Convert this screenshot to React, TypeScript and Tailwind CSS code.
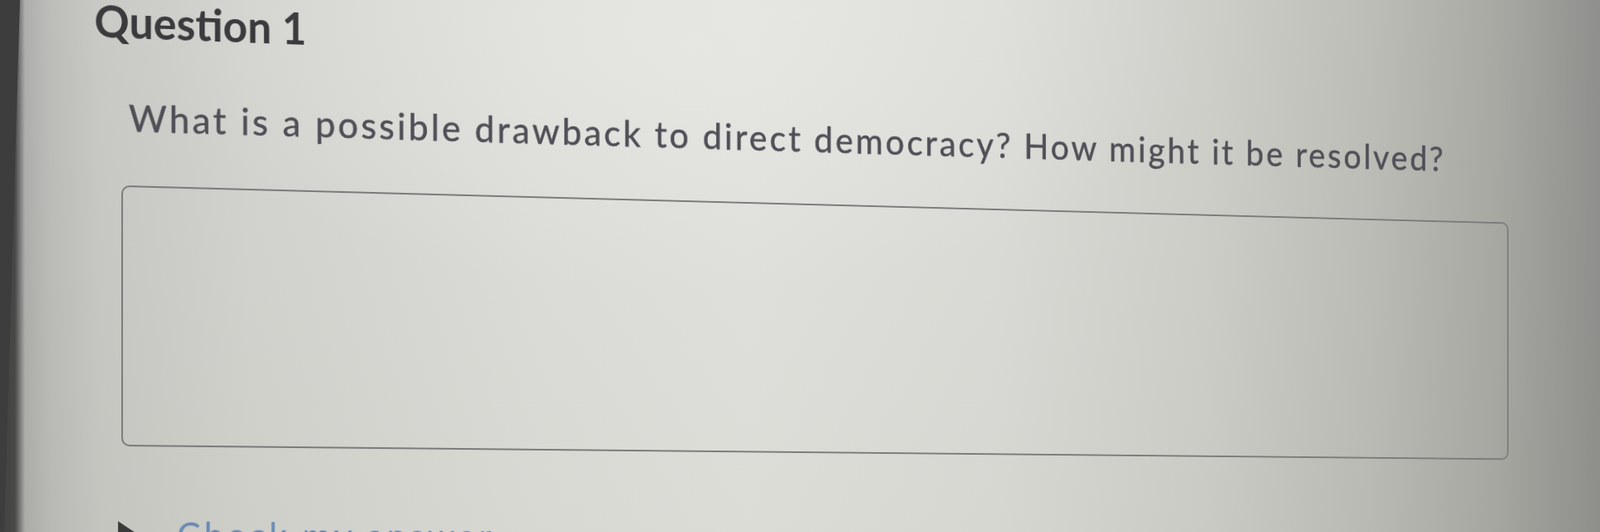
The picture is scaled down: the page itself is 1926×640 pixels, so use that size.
import React from "react";

export default function App() {
  return (
    <div className="relative w-[1926px] h-[640px] overflow-hidden font-['Lato',sans-serif] bg-[linear-gradient(90deg,#3e3e3e_0px,#464646_18px,#aeaeac_30px,#bcbcb9_60px,#c9c9c5_120px,#d3d4cf_300px,#dededa_650px,#e2e2de_900px,#dcdcd8_1200px,#cfcfca_1450px,#bdbdb8_1650px,#a9a9a4_1800px,#8f8f8d_1926px)]">
      {/* photo lighting */}
      <div className="pointer-events-none absolute inset-0 bg-[radial-gradient(ellipse_900px_420px_at_820px_60px,rgba(236,236,234,0.45),rgba(236,236,234,0)_70%)]" />
      <div className="pointer-events-none absolute inset-0 bg-[linear-gradient(180deg,rgba(0,0,0,0)_0%,rgba(120,125,100,0.06)_100%)]" />
      {/* screen bezel edge */}
      <div className="pointer-events-none absolute left-0 top-0 h-full w-[30px] bg-[#3d3d3d] [clip-path:polygon(0_0,24px_0,5px_100%,0_100%)]" />

      {/* content, photographed at an angle */}
      <div className="relative w-[2100px] h-[640px] origin-[150px_718px] [transform:perspective(3264px)_rotateY(10deg)]">
        <div className="flex flex-col items-start pl-[113px] pt-[2px]">
          <h2 className="text-[53px] leading-[48px] font-bold text-[#3b3b3e] whitespace-nowrap">
            Question 1
          </h2>
          <p className="ml-[42px] mt-[65px] text-[45px] leading-[52px] tracking-[3.4px] text-[#4f4f57] [-webkit-text-stroke:0.5px_#4f4f57] whitespace-nowrap">
            What is a possible drawback to direct democracy? How might it be resolved?
          </p>
          <div className="ml-[33px] mt-[56px] w-[1863px] h-[314px] rounded-[10px] border-2 border-[#7a7a7a]" />
          <div className="ml-[29px] mt-[80px] flex items-start gap-[46px]">
            <svg width="26" height="34" viewBox="0 0 26 34" className="mt-[10px] shrink-0">
              <polygon points="0,0 26,17 0,34" fill="#3a3a3a" />
            </svg>
            <span className="text-[44px] leading-[52px] tracking-[4px] text-[#6a8ab5] whitespace-nowrap">
              Check my answer
            </span>
          </div>
        </div>
      </div>
    </div>
  );
}
